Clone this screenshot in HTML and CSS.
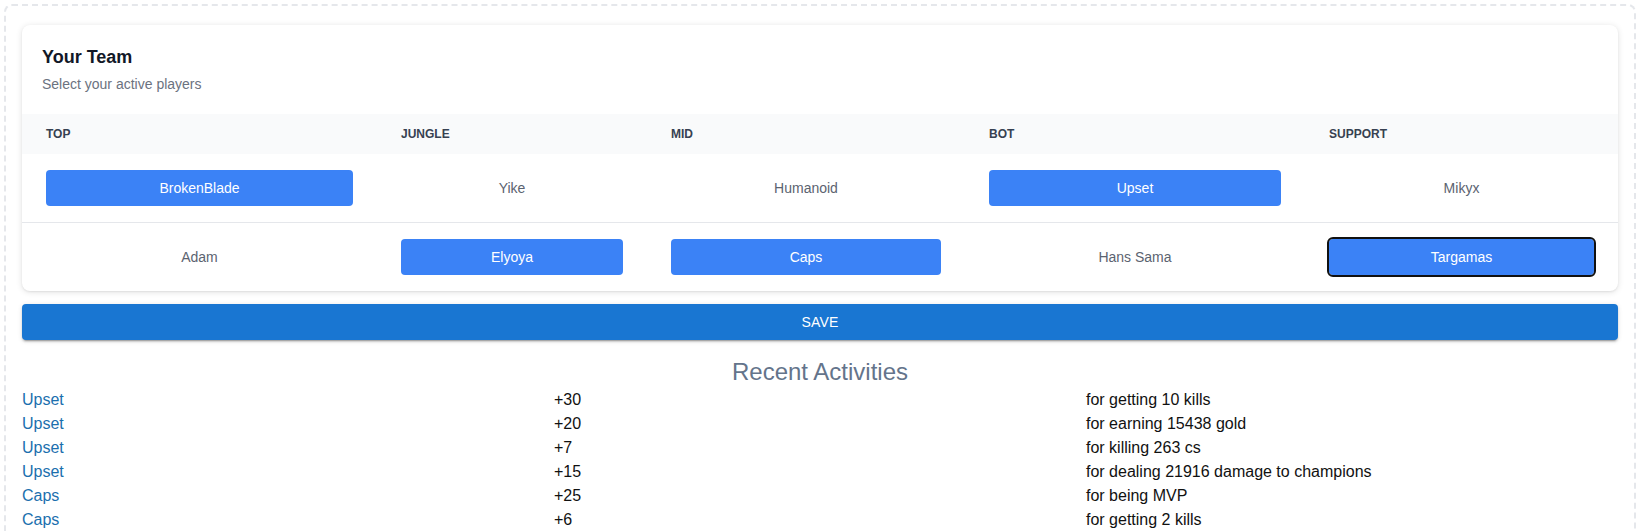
FILE: index.html
```html
<!DOCTYPE html>
<html>
<head>
<meta charset="utf-8">
<link rel="stylesheet" href="styles.css">
</head>
<body>
<div class="frame">
  <div class="card">
    <div class="card-head">
      <h1 class="title">Your Team</h1>
      <p class="subtitle">Select your active players</p>
    </div>
    <div class="roster">
      <div class="row head">
        <div class="cell">TOP</div>
        <div class="cell">JUNGLE</div>
        <div class="cell">MID</div>
        <div class="cell">BOT</div>
        <div class="cell">SUPPORT</div>
      </div>
      <div class="row players divided">
        <div class="cell"><button class="pick on">BrokenBlade</button></div>
        <div class="cell"><button class="pick">Yike</button></div>
        <div class="cell"><button class="pick">Humanoid</button></div>
        <div class="cell"><button class="pick on">Upset</button></div>
        <div class="cell"><button class="pick">Mikyx</button></div>
      </div>
      <div class="row players">
        <div class="cell"><button class="pick">Adam</button></div>
        <div class="cell"><button class="pick on">Elyoya</button></div>
        <div class="cell"><button class="pick on">Caps</button></div>
        <div class="cell"><button class="pick">Hans Sama</button></div>
        <div class="cell"><button class="pick on focus">Targamas</button></div>
      </div>
    </div>
  </div>
  <button class="save">SAVE</button>
  <h2 class="recent">Recent Activities</h2>
  <div class="activities">
    <a class="who">Upset</a><span class="pts">+30</span><span class="why">for getting 10 kills</span>
    <a class="who">Upset</a><span class="pts">+20</span><span class="why">for earning 15438 gold</span>
    <a class="who">Upset</a><span class="pts">+7</span><span class="why">for killing 263 cs</span>
    <a class="who">Upset</a><span class="pts">+15</span><span class="why">for dealing 21916 damage to champions</span>
    <a class="who">Caps</a><span class="pts">+25</span><span class="why">for being MVP</span>
    <a class="who">Caps</a><span class="pts">+6</span><span class="why">for getting 2 kills</span>
  </div>
</div>
</body>
</html>
```

FILE: styles.css
```css
* { box-sizing: border-box; }
html, body { margin: 0; padding: 0; background: #ffffff; }
body {
  padding: 4px 3px 0 4px;
  font-family: "Liberation Sans", Arial, sans-serif;
  color: #000;
}
.frame {
  border: 2px dashed #e5e7eb;
  border-radius: 8px;
  padding: 19px 16px 16px 16px;
}
.card {
  background: #fff;
  border-radius: 8px;
  box-shadow: 0 1px 6px rgba(0,0,0,0.12), 0 1px 2px rgba(0,0,0,0.06);
  overflow: hidden;
}
.card-head { padding: 20px 20px 20px 20px; }
.title {
  margin: 0;
  font-size: 18px;
  line-height: 24px;
  font-weight: 700;
  color: #111827;
}
.subtitle {
  margin: 5px 0 0 0;
  font-size: 14px;
  line-height: 20px;
  color: #6b7280;
}
.row {
  display: grid;
  grid-template-columns: 355px 270px 318px 340px 1fr;
}
.row.head { background: #f9fafb; }
.row.head .cell {
  padding: 12px 24px;
  font-size: 12px;
  line-height: 16px;
  font-weight: 700;
  color: #374151;
}
.row.players .cell { padding: 16px 24px; }
.row.divided { border-bottom: 1px solid #e5e7eb; }
.pick {
  display: block;
  width: 100%;
  height: 36px;
  border: 0;
  border-radius: 4px;
  background: transparent;
  font-family: "Liberation Sans", Arial, sans-serif;
  font-size: 14px;
  color: #5b6370;
  cursor: pointer;
  padding: 0;
}
.pick.on { background: #3b82f6; color: #fff; }
.pick.focus { outline: 2px solid #111; outline-offset: 0; }
.save {
  display: block;
  width: 100%;
  margin-top: 13px;
  height: 36px;
  border: 0;
  border-radius: 4px;
  background: #1976d2;
  color: #fff;
  font-family: "Liberation Sans", Arial, sans-serif;
  font-size: 14px;
  letter-spacing: 0.2px;
  box-shadow: 0 3px 1px -2px rgba(0,0,0,0.2), 0 2px 2px 0 rgba(0,0,0,0.14), 0 1px 5px 0 rgba(0,0,0,0.12);
}
.recent {
  margin: 16px 0 0 0;
  text-align: center;
  font-size: 24px;
  line-height: 32px;
  font-weight: 400;
  color: #64748b;
}
.activities {
  display: grid;
  grid-template-columns: 1fr 1fr 1fr;
  font-size: 16px;
  line-height: 24px;
}
.who { color: #1b6fae; text-decoration: none; }
.pts, .why { color: #111; }
```
